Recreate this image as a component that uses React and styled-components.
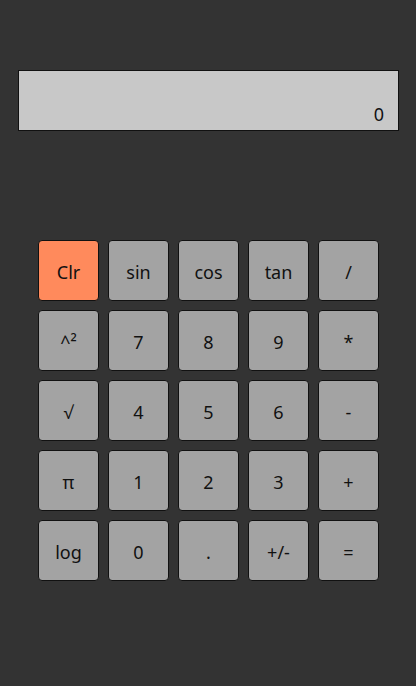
import React from "react";
import styled, { createGlobalStyle } from "styled-components";

const Global = createGlobalStyle`
  html, body { margin: 0; padding: 0; background: #333333; }
  body { font-family: "Noto Sans", "Open Sans", sans-serif; }
`;

const Page = styled.div`
  min-height: 686px;
  display: flex;
  flex-direction: column;
  align-items: flex-start;
  padding: 70px 0 0 18px;
  box-sizing: border-box;
`;

const Display = styled.div`
  width: 381px;
  height: 61px;
  box-sizing: border-box;
  border: 1px solid #111;
  background: #c8c8c8;
  display: flex;
  justify-content: flex-end;
  align-items: flex-end;
  padding: 0 14px 4px 0;
  font-size: 18px;
  color: #111;
`;

const Grid = styled.div`
  margin: 109px 0 0 20px;
  display: grid;
  grid-template-columns: repeat(5, 61px);
  grid-auto-rows: 61px;
  gap: 9px;
`;

const Key = styled.button`
  box-sizing: border-box;
  border: 1px solid #111;
  border-radius: 4px;
  background: ${(p) => (p.$accent ? "#ff8a5c" : "#a3a3a3")};
  color: #111;
  font-family: "Noto Sans", "Open Sans", sans-serif;
  font-size: 18px;
  padding: 2px 0 0;
  display: flex;
  align-items: center;
  justify-content: center;
`;

const keys = [
  "Clr", "sin", "cos", "tan", "/",
  "^²", "7", "8", "9", "*",
  "√", "4", "5", "6", "-",
  "π", "1", "2", "3", "+",
  "log", "0", ".", "+/-", "=",
];

export default function App() {
  return (
    <>
      <Global />
      <Page>
        <Display>0</Display>
        <Grid>
          {keys.map((k) => (
            <Key key={k} $accent={k === "Clr"}>{k}</Key>
          ))}
        </Grid>
      </Page>
    </>
  );
}
